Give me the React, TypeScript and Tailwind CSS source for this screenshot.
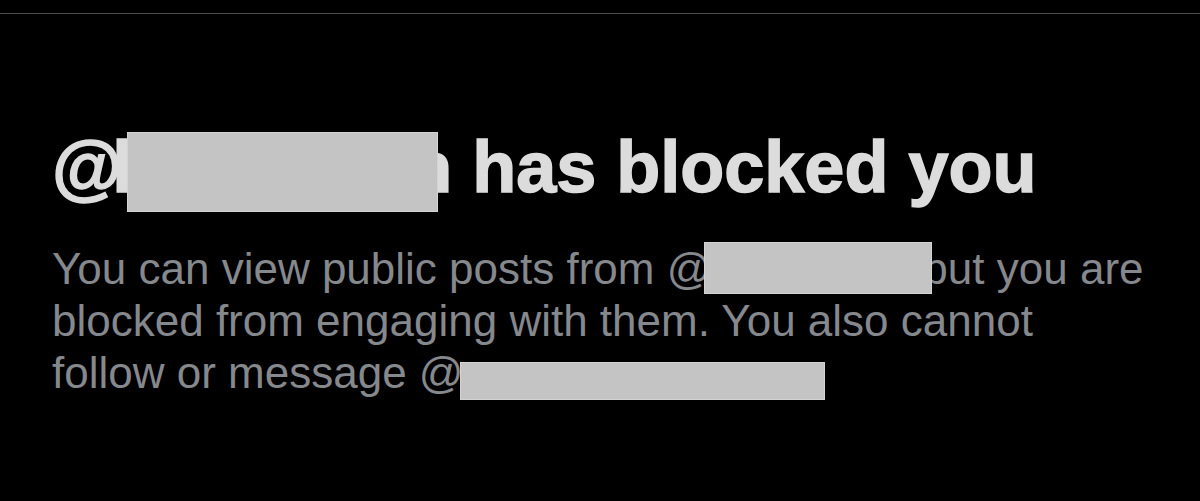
const FONT = { fontFamily: '"Liberation Sans", Arial, sans-serif' };

function Redaction({ className }: { className: string }) {
  return <span className={`absolute bg-[#c4c4c4] border border-[#d3d3d3] ${className}`} />;
}

export default function App() {
  return (
    <div className="h-[501px] w-[1200px] overflow-hidden bg-black" style={FONT}>
      <div className="h-[13px]" />
      <div className="h-px bg-[#4b4b4b]" />

      <div className="pl-[52px] pt-[117px]">
        <div className="whitespace-nowrap text-[72px] font-bold leading-[72px] text-[#dcdcdc] [-webkit-text-stroke:1.5px_#dcdcdc]">
          <span className="tracking-[-10px]">@</span>
          <span className="relative inline-block">
            l<span className="inline-block w-[276px]" />n
            <Redaction className="left-[15px] top-px h-[80px] w-[311px]" />
          </span>{" "}
          has blocked you
        </div>

        <div className="mt-[40px] whitespace-nowrap text-[44px] leading-[52px] text-[#85888c]">
          <div>
            You can view public posts from @
            <span className="relative inline-block h-[40px] w-[212px] align-baseline">
              <Redaction className="-left-[7px] -top-[2px] h-[52px] w-[228px]" />
            </span>
            but you are
          </div>
          <div>blocked from engaging with them. You also cannot</div>
          <div>
            follow or message @
            <span className="relative inline-block h-[40px] w-[365px] align-baseline">
              <Redaction className="-left-[4px] top-[14px] h-[38px] w-[365px]" />
            </span>
          </div>
        </div>
      </div>
    </div>
  );
}
